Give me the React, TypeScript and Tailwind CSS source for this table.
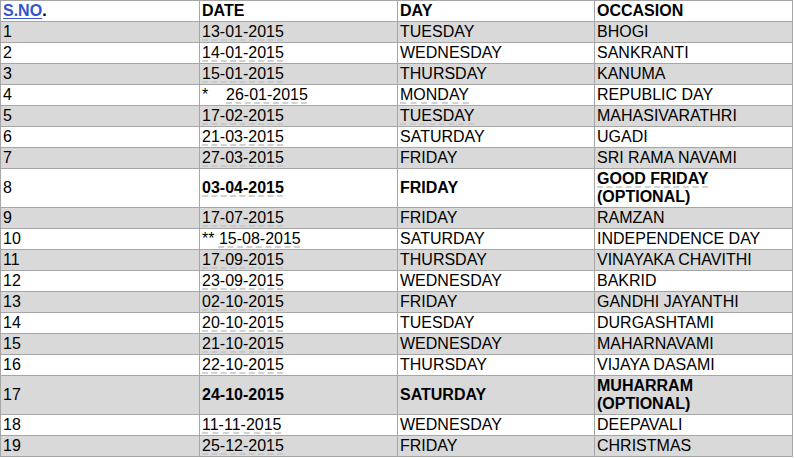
import type { ReactNode } from "react";

interface Holiday {
  sno: number;
  date: ReactNode;
  day: string;
  occasion: string;
  bold?: boolean;
  optional?: boolean;
  dayDashed?: boolean;
}

const dash = "underline decoration-dashed decoration-[#c4c4c4] underline-offset-[3px]";

const d = (text: string) => <span className={dash}>{text}</span>;

const holidays: Holiday[] = [
  { sno: 1, date: d("13-01-2015"), day: "TUESDAY", occasion: "BHOGI" },
  { sno: 2, date: d("14-01-2015"), day: "WEDNESDAY", occasion: "SANKRANTI" },
  { sno: 3, date: d("15-01-2015"), day: "THURSDAY", occasion: "KANUMA" },
  { sno: 4, date: <>{"*    "}{d("26-01-2015")}</>, day: "MONDAY", occasion: "REPUBLIC DAY", dayDashed: true },
  { sno: 5, date: d("17-02-2015"), day: "TUESDAY", occasion: "MAHASIVARATHRI", dayDashed: true },
  { sno: 6, date: d("21-03-2015"), day: "SATURDAY", occasion: "UGADI" },
  { sno: 7, date: d("27-03-2015"), day: "FRIDAY", occasion: "SRI RAMA NAVAMI" },
  { sno: 8, date: d("03-04-2015"), day: "FRIDAY", occasion: "GOOD FRIDAY", bold: true, optional: true },
  { sno: 9, date: d("17-07-2015"), day: "FRIDAY", occasion: "RAMZAN" },
  { sno: 10, date: <>{"** "}{d("15-08-2015")}</>, day: "SATURDAY", occasion: "INDEPENDENCE DAY" },
  { sno: 11, date: d("17-09-2015"), day: "THURSDAY", occasion: "VINAYAKA CHAVITHI" },
  { sno: 12, date: d("23-09-2015"), day: "WEDNESDAY", occasion: "BAKRID" },
  { sno: 13, date: d("02-10-2015"), day: "FRIDAY", occasion: "GANDHI JAYANTHI" },
  { sno: 14, date: d("20-10-2015"), day: "TUESDAY", occasion: "DURGASHTAMI" },
  { sno: 15, date: d("21-10-2015"), day: "WEDNESDAY", occasion: "MAHARNAVAMI" },
  { sno: 16, date: d("22-10-2015"), day: "THURSDAY", occasion: "VIJAYA DASAMI" },
  { sno: 17, date: "24-10-2015", day: "SATURDAY", occasion: "MUHARRAM", bold: true, optional: true },
  { sno: 18, date: d("11-11-2015"), day: "WEDNESDAY", occasion: "DEEPAVALI" },
  { sno: 19, date: d("25-12-2015"), day: "FRIDAY", occasion: "CHRISTMAS" },
];

const cell = "border border-[#a6a6a6] pl-[2px] py-0 align-middle text-left whitespace-pre";

export default function App() {
  return (
    <div className="bg-white text-black text-[16px] leading-[18px] font-['Liberation_Sans',Arial,sans-serif]">
      <table className="table-fixed border-collapse w-[792px]">
        <colgroup>
          <col className="w-[199px]" />
          <col className="w-[198px]" />
          <col className="w-[197px]" />
          <col className="w-[198px]" />
        </colgroup>
        <thead>
          <tr className="h-[21px] bg-white font-bold">
            <th className={cell}>
              <span className="text-[#3355cc] underline underline-offset-2">S.NO</span>.
            </th>
            <th className={cell}>DATE</th>
            <th className={cell}>DAY</th>
            <th className={cell}>OCCASION</th>
          </tr>
        </thead>
        <tbody>
          {holidays.map((h, idx) => (
            <tr
              key={h.sno}
              className={`${h.optional ? "h-[39px]" : "h-[21px]"} ${idx % 2 === 0 ? "bg-[#d9d9d9]" : "bg-white"}`}
            >
              <td className={cell}>{h.sno}</td>
              <td className={`${cell} ${h.bold ? "font-bold" : ""}`}>{h.date}</td>
              <td className={`${cell} ${h.bold ? "font-bold" : ""}`}>
                {h.dayDashed ? <span className={dash}>{h.day}</span> : h.day}
              </td>
              <td className={`${cell} ${h.bold ? "font-bold" : ""}`}>
                {h.optional ? (
                  <>
                    {h.sno === 8 ? <span className={dash}>{h.occasion}</span> : h.occasion}
                    {"\n(OPTIONAL)"}
                  </>
                ) : (
                  h.occasion
                )}
              </td>
            </tr>
          ))}
        </tbody>
      </table>
    </div>
  );
}
